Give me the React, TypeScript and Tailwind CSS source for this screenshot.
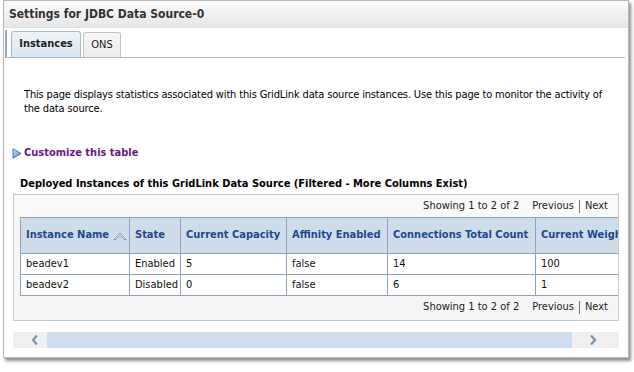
import React from "react";

const F = { fontFamily: '"DejaVu Sans Condensed", "DejaVu Sans", sans-serif' };

function SortIcon() {
  return (
    <svg width="14" height="10" viewBox="0 0 14 10" className="ml-[4px]">
      <path d="M1 8.5 L7 2 L13 8.5 L11 8.5 L7 4.3 L3 8.5 Z" fill="#f4f6f8" stroke="#8a97a5" strokeWidth="1" strokeLinejoin="round" />
    </svg>
  );
}

function Pager() {
  return (
    <div className="flex items-center justify-end h-[22px] pr-[10px] text-[11px] text-[#222]">
      <span>Showing 1 to 2 of 2</span>
      <span className="ml-[13px]">Previous</span>
      <span className="mx-[5px] w-px h-[13px] bg-[#777]" />
      <span>Next</span>
    </div>
  );
}

const cols = [
  { name: "Instance Name", w: 109, sort: true },
  { name: "State", w: 51 },
  { name: "Current Capacity", w: 106 },
  { name: "Affinity Enabled", w: 101 },
  { name: "Connections Total Count", w: 148 },
  { name: "Current Weight", w: 110 },
];

const rows = [
  ["beadev1", "Enabled", "5", "false", "14", "100"],
  ["beadev2", "Disabled", "0", "false", "6", "1"],
];

export default function App() {
  return (
    <div className="w-[634px] h-[372px] bg-white pl-[3px]" style={F}>
      <div className="w-[626px] h-[358px] border border-[#b9b9b9] bg-white shadow-[2px_3px_3px_rgba(0,0,0,0.45)] flex flex-col">
        <div className="h-[27px] shrink-0 bg-gradient-to-b from-[#fbfbfb] to-[#e6e6e6] border-b border-[#e2e2e2] flex items-center pl-[5px] text-[12px] font-bold text-[#333]">
          Settings for JDBC Data Source-0
        </div>
        <div className="mt-[2px] ml-[1px] mr-[3px] h-[28px] border-l-2 border-[#94a9be] border-b border-b-[#a9bccc] flex items-end pl-[4px] gap-[2px]">
          <div className="w-[70px] h-[26px] rounded-t-[3px] border border-b-0 border-[#a7bacb] bg-gradient-to-b from-[#eef4f8] to-[#d9e5ef] flex items-center justify-center text-[11px] font-bold text-[#222]">
            Instances
          </div>
          <div className="w-[38px] h-[25px] rounded-t-[3px] border border-b-0 border-[#c4c4c4] bg-gradient-to-b from-[#f7f7f7] to-[#ececec] flex items-center justify-center text-[11px] text-[#222]">
            ONS
          </div>
        </div>
        <p className="mt-[30px] pl-[20px] pr-[10px] text-[11px] leading-[14px] tracking-[-0.15px] text-black">
          This page displays statistics associated with this GridLink data source instances. Use this page to monitor the activity of the data source.
        </p>
        <div className="mt-[30px] flex items-center h-[14px] pl-[8px]">
          <svg width="10" height="11" viewBox="0 0 10 11">
            <defs>
              <linearGradient id="ag" x1="0" y1="0" x2="1" y2="1">
                <stop offset="0" stopColor="#d8e8fb" />
                <stop offset="1" stopColor="#3f7fd0" />
              </linearGradient>
            </defs>
            <path d="M1 0.8 L9 5.5 L1 10.2 Z" fill="url(#ag)" stroke="#3a6eae" strokeWidth="1" strokeLinejoin="round" />
          </svg>
          <span className="ml-[2px] text-[11px] font-bold text-[#6a1b7d]">Customize this table</span>
        </div>
        <div className="mt-[17px] pl-[16px] h-[14px] flex items-center text-[11px] font-bold text-black">
          Deployed Instances of this GridLink Data Source (Filtered - More Columns Exist)
        </div>
        <div className="mt-[3px] ml-[9px] w-[606px] h-[127px] border border-[#c9c9c9] bg-[#f6f6f6] flex flex-col">
          <div className="bg-[#fafafa]">
            <Pager />
          </div>
          <div className="ml-[6px] overflow-hidden">
            <table className="border-collapse text-[11px] table-fixed" style={{ width: 625 }}>
              <thead>
                <tr className="h-[36px] bg-[#cfdcea]">
                  {cols.map((c) => (
                    <th key={c.name} style={{ width: c.w }} className="border border-[#8ea2b7] px-[5px] text-left font-bold text-[#1e4a8a] whitespace-nowrap overflow-hidden">
                      <span className="inline-flex items-center">
                        {c.name}
                        {c.sort && <SortIcon />}
                      </span>
                    </th>
                  ))}
                </tr>
              </thead>
              <tbody>
                {rows.map((r, i) => (
                  <tr key={i} className="h-[21px] bg-white">
                    {r.map((v, j) => (
                      <td key={j} className="border border-[#8ea2b7] px-[5px] text-[#111] whitespace-nowrap">
                        {v}
                      </td>
                    ))}
                  </tr>
                ))}
              </tbody>
            </table>
          </div>
          <div>
            <Pager />
          </div>
        </div>
        <div className="mt-[11px] ml-[9px] w-[606px] h-[16px] bg-[#f0f0f0] flex items-center">
          <div className="w-[34px] flex justify-center pl-[10px]">
            <svg width="8" height="12" viewBox="0 0 8 12">
              <path d="M6 1.5 L2 6 L6 10.5" fill="none" stroke="#7d93aa" strokeWidth="2.2" />
            </svg>
          </div>
          <div className="w-[525px] h-[16px] bg-[#cfdeee]" />
          <div className="flex-1 flex justify-center pr-[6px]">
            <svg width="8" height="12" viewBox="0 0 8 12">
              <path d="M2 1.5 L6 6 L2 10.5" fill="none" stroke="#7d93aa" strokeWidth="2.2" />
            </svg>
          </div>
        </div>
      </div>
    </div>
  );
}
